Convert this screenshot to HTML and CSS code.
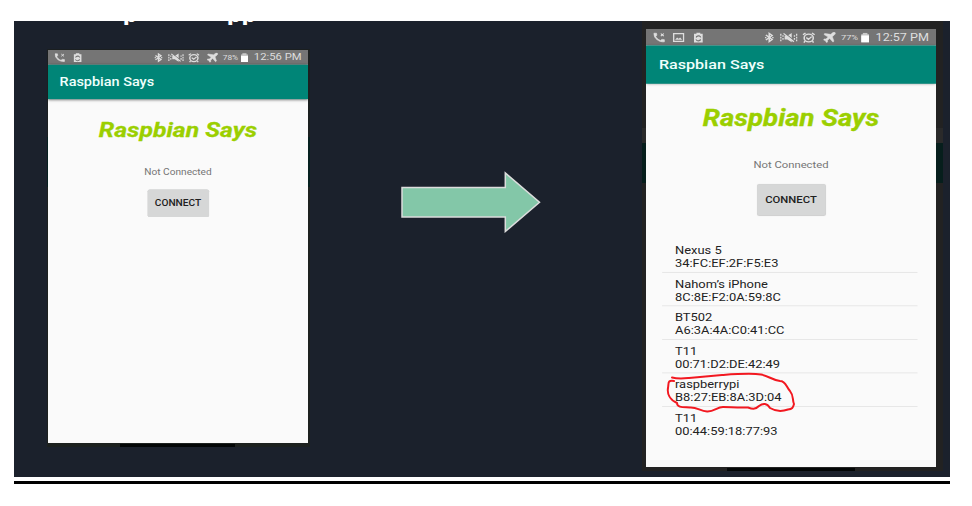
FILE: index.html
```html
<!DOCTYPE html>
<html lang="en">
<head>
<meta charset="utf-8">
<title>Raspbian Says</title>
<link rel="stylesheet" href="styles.css">
</head>
<body>
<svg class="defs" width="0" height="0" aria-hidden="true">
  <symbol id="call" viewBox="0 0 24 24"><path d="M5 9.500c1.500 4 5 7.500 9.500 9.500l2.500-2.500c.4-.4.9-.4 1.300-.2 1.200.4 2.300.6 3.700.6v5C11 23 1 14 1 2h5.500c0 1.500.2 2.500.6 3.800.1.400 0 .9-.3 1.200z" stroke="currentColor" stroke-width="1.500"/><path d="M15 2.500l6 6M21 2.500l-6 6" stroke="currentColor" stroke-width="2.200"/></symbol>
  <symbol id="image" viewBox="0 0 24 24"><path d="M2 3h20v18H2z" fill="none" stroke="currentColor" stroke-width="3"/><path d="M5 17l4-5 3 3 3-3 4 5z"/></symbol>
  <symbol id="clip" viewBox="0 0 20 24"><path fill-rule="evenodd" d="M1 3h5V0h8v3h5v21H1zM5 9v4l2-2c2-3 6-2 7 1l2-1c-2-5-7-6-10-3zM15 20v-5l-2 2c-2 3-6 2-7-1l-2 1c2 5 7 6 10 3z"/></symbol>
  <symbol id="bt" viewBox="0 0 20 24"><path d="M3 6l13 11-6 5V2l6 5L3 18M1 12h3M16 12h3" fill="none" stroke="currentColor" stroke-width="3.200"/></symbol>
  <symbol id="mute" viewBox="0 0 34 24"><path d="M9 8h5l8-6v20l-8-6H9z"/><path d="M9 2l18 17" stroke="#777" stroke-width="2"/><path d="M7 3l19 18M2 4v4M2 10v4M2 16v4M6 7v3M6 13v4M27 7v3M27 13v4M31 4v4M31 10v4M31 16v4" fill="none" stroke="currentColor" stroke-width="2.400"/></symbol>
  <symbol id="alarm" viewBox="0 0 24 24"><circle cx="12" cy="13" r="8.500" fill="none" stroke="currentColor" stroke-width="3"/><path d="M1 6l5-4M23 6l-5-4M7.500 12l4 4 6-6M5 20l-2 3M19 20l2 3" fill="none" stroke="currentColor" stroke-width="2.800"/></symbol>
  <symbol id="plane" viewBox="0 0 24 24"><path d="M22 1c1 1 1 3-1 5l-4 4 3 10-2 2-6-8-4 4v4l-2 1-2-4-4-2 2-2h3l4-4-8-6 2-2 11 2 4-4c1-1 3-1 4 0z" stroke="currentColor" stroke-width="1"/></symbol>
  <symbol id="battery" viewBox="0 0 14 20"><path d="M3 0h8v3h3v17H0V3h3z" fill="#c9c9c9"/><path d="M0 6h14v14H0z" fill="#fff"/></symbol>
</svg>

<main class="slide">
  <div class="heading"><span class="word-one">p</span><span>pp</span></div>

  <section class="device device-small">
    <div class="viewport">
      <div class="screen">
        <div class="status">
          <div class="notices">
            <svg class="i-call"><use href="#call"/></svg>
            <svg class="i-clip"><use href="#clip"/></svg>
          </div>
          <div class="system">
            <svg class="i-bt"><use href="#bt"/></svg>
            <svg class="i-mute"><use href="#mute"/></svg>
            <svg class="i-alarm"><use href="#alarm"/></svg>
            <svg class="i-plane"><use href="#plane"/></svg>
            <span class="percent">78%</span>
            <svg class="i-battery"><use href="#battery"/></svg>
            <span class="time">12:56 PM</span>
          </div>
        </div>
        <header class="toolbar">Raspbian Says</header>
        <h1>Raspbian Says</h1>
        <p class="state">Not Connected</p>
        <button class="connect">CONNECT</button>
      </div>
    </div>
  </section>

  <svg class="arrow" width="142" height="62" viewBox="0 0 142 62"><path d="M2 16.500H105.300V2L139.500 31.300 105.300 60.500V46H2z"/></svg>

  <section class="device device-large">
    <div class="viewport">
      <div class="screen">
        <div class="status">
          <div class="notices">
            <svg class="i-call"><use href="#call"/></svg>
            <svg class="i-image"><use href="#image"/></svg>
            <svg class="i-clip"><use href="#clip"/></svg>
          </div>
          <div class="system">
            <svg class="i-bt"><use href="#bt"/></svg>
            <svg class="i-mute"><use href="#mute"/></svg>
            <svg class="i-alarm"><use href="#alarm"/></svg>
            <svg class="i-plane"><use href="#plane"/></svg>
            <span class="percent">77%</span>
            <svg class="i-battery"><use href="#battery"/></svg>
            <span class="time">12:57 PM</span>
          </div>
        </div>
        <header class="toolbar">Raspbian Says</header>
        <h1>Raspbian Says</h1>
        <p class="state">Not Connected</p>
        <button class="connect">CONNECT</button>
        <ul class="peers">
          <li>Nexus 5<br>34:FC:EF:2F:F5:E3</li>
          <li>Nahom’s iPhone<br>8C:8E:F2:0A:59:8C</li>
          <li>BT502<br>A6:3A:4A:C0:41:CC</li>
          <li>T11<br>00:71:D2:DE:42:49</li>
          <li>raspberrypi<br>B8:27:EB:8A:3D:04</li>
          <li>T11<br>00:44:59:18:77:93</li>
        </ul>
      </div>
    </div>
    <svg class="scribble" width="134" height="46" viewBox="664 370 134 46"><path d="M672 377.500C678 379 683 378.500 689 378C700 377 711 376 722 375C737 374 751 373 761 374.500C769 376 772 380 780 381C786 381 786 387 790 391C794 396 792 399 794 404C793 407 793 409 788 409.500C781 412 775 411 770 408C767 403 763 403 759 406C755 410 752 409 748 407.500C738 408 730 407 723 407C717 407 714 412 707 411.500C700 411 697 407 690 407.500C684 407 677 408 677 403C670 400 667 394 668 388C669 383 667 380 674 381"/></svg>
  </section>
</main>
<hr class="rule">
</body>
</html>
```
FILE: styles.css
```css
* { box-sizing: border-box; }
body { margin: 0; padding: 21px 22px 0 14px; background: #fff; font-family: Roboto, "Liberation Sans", sans-serif; }
.defs { display: block; height: 0; }
.slide { position: relative; display: flex; align-items: flex-start; height: 456px; background: #1b212c; overflow: hidden; }
.heading { position: absolute; left: 109px; top: 0; height: 4px; overflow: hidden; display: flex; color: #fff; font-size: 26px; font-weight: 700; line-height: 26px; }
.heading span { margin-top: -21px; }
.word-one { width: 104px; }

.device { position: relative; flex: none; display: flex; align-items: flex-start; }
.device::after { content: ""; position: absolute; bottom: 0; height: 3px; background: #030606; }
.device-small { margin: 28px 0 0 33px; width: 263px; height: 398px; padding: 1px 0 0 1px; background: linear-gradient(#1b1f20 0 88px, #06201f 88px 138px, #1d211f 138px); }
.device-small::after { left: 73px; width: 115px; }
.device-large { margin: 0 7px 0 100px; width: 301px; height: 450px; padding: 8px 0 0 4px; background: linear-gradient(#222 0 107px, #2a2a2a 107px 122px, #061e1c 122px 162px, #222 162px); }
.device-large::after { left: 85px; width: 128px; }

.viewport { overflow: hidden; background: #fafafa; }
.device-small .viewport { width: 260px; height: 393px; }
.device-large .viewport { width: 290px; height: 438px; }
.screen { width: 360px; height: 640px; transform-origin: 0 0; background: #fafafa; }
.device-small .screen { transform: scale(.7222, .6141); }
.device-large .screen { transform: scale(.8056, .6844); }

.status { display: flex; justify-content: space-between; height: 24px; padding: 0 10px 0 9px; background: #757575; color: #dedede; }
.notices, .system { display: flex; align-items: center; }
.status svg { display: block; flex: none; height: 17px; fill: currentColor; }
.notices .i-call { width: 15px; }
.notices .i-image { width: 15px; margin-left: 9px; }
.notices .i-clip { width: 12px; margin-left: 11px; }
.system .i-bt { width: 12px; }
.system .i-mute { width: 23px; margin-left: 7px; }
.system .i-alarm { width: 16px; margin-left: 5px; }
.system .i-plane { width: 16px; margin-left: 10px; }
.percent { width: 22px; margin-left: 6px; font-size: 11.5px; }
.system .i-battery { width: 10px; margin-left: 3px; height: 15px; }
.time { width: 65px; margin-left: 8px; font-size: 15.6px; white-space: nowrap; }

.toolbar { height: 56px; padding-left: 16px; background: #008577; color: #f0fffc; font-size: 20px; font-weight: 500; line-height: 57px; box-shadow: 0 1px 4px rgba(0, 0, 0, .5); }
h1 { margin: 28px 0 0; height: 42px; text-align: center; color: #9bcf00; font-size: 34.3px; font-weight: 700; font-style: italic; line-height: 42px; -webkit-text-stroke: .5px #9bcf00; }
.state { margin: 38px 0 0; text-align: center; color: #757575; font-size: 14px; line-height: 20px; }
.connect { display: block; width: 85px; height: 45px; margin: 18.5px auto 0; padding: 0; border: 0; border-radius: 3px; background: #d6d7d7; box-shadow: 0 0 1px #ccc; color: #202020; font: 500 14px Roboto, sans-serif; }
.peers { margin: 35.5px 23px 0 20px; padding: 0; list-style: none; color: #222; font-size: 16px; line-height: 19px; }
.peers li { height: 49px; padding: 7px 0 0 16px; border-bottom: 1.5px solid #dedede; white-space: nowrap; }
.peers li:last-child { border-bottom: 0; }

.arrow { flex: none; margin: 150px 0 0 90px; }
.arrow path { fill: #83c7a8; stroke: #dcdcdc; stroke-width: 1.5; }
.scribble { position: absolute; left: 22px; top: 349px; }
.scribble path { fill: none; stroke: #f21820; stroke-width: 2; stroke-linecap: round; stroke-linejoin: round; }
.rule { height: 3px; margin: 4px 0 0; border: 0; background: #000; }
```
